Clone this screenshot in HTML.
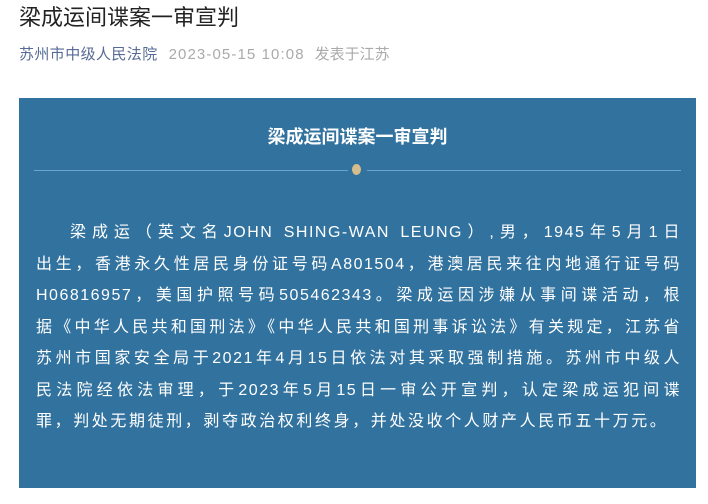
<!DOCTYPE html>
<html><head><meta charset="utf-8"><style>
body{margin:0;background:#fff;width:708px;height:504px;overflow:hidden;font-family:"Liberation Sans","Noto Sans CJK SC",sans-serif;}
h1{position:absolute;left:19px;top:3px;margin:0;font-size:22px;font-weight:normal;color:#222;line-height:30px;}
.meta{position:absolute;left:19px;top:45px;font-size:15px;line-height:20px;color:#aaa;white-space:nowrap;}
.meta .a{color:#576b95;margin-right:11px;letter-spacing:0.4px;}
.meta .t{margin-right:10px;letter-spacing:1.1px;}
.box{position:absolute;left:19px;top:98px;width:677px;height:390px;background:#31729f;}
.hd{position:absolute;top:27px;left:0;width:100%;text-align:center;color:#fff;font-weight:bold;font-size:18px;line-height:24px;}
.ln{position:absolute;top:72px;height:1px;background:#6ba3d6;}
.dot{position:absolute;left:333px;top:66px;width:9px;height:11px;border-radius:50%;background:#d4bc8c;}
.tx{position:absolute;left:17px;top:119px;width:645px;color:#fff;font-size:16px;line-height:31.5px;letter-spacing:1.5px;}
.tx div{text-align:justify;text-align-last:justify;white-space:nowrap;}
.tx div.i{padding-left:34px;}
.tx div.l{text-align-last:left;letter-spacing:2.6px;}
</style></head><body>
<h1>梁成运间谍案一审宣判</h1>
<div class="meta"><span class="a">苏州市中级人民法院</span><span class="t">2023-05-15 10:08</span><span>发表于江苏</span></div>
<div class="box">
<div class="hd">梁成运间谍案一审宣判</div>
<div class="ln" style="left:15px;width:314px"></div>
<div class="ln" style="left:348px;width:314px"></div>
<div class="dot"></div>
<div class="tx">
<div class="i">梁成运（英文名JOHN SHING-WAN LEUNG）,男，1945年5月1日</div>
<div>出生，香港永久性居民身份证号码A801504，港澳居民来往内地通行证号码</div>
<div>H06816957，美国护照号码505462343。梁成运因涉嫌从事间谍活动，根</div>
<div>据《中华人民共和国刑法》《中华人民共和国刑事诉讼法》有关规定，江苏省</div>
<div>苏州市国家安全局于2021年4月15日依法对其采取强制措施。苏州市中级人</div>
<div>民法院经依法审理，于2023年5月15日一审公开宣判，认定梁成运犯间谍</div>
<div class="l">罪，判处无期徒刑，剥夺政治权利终身，并处没收个人财产人民币五十万元。</div>
</div>
</div>
</body></html>
